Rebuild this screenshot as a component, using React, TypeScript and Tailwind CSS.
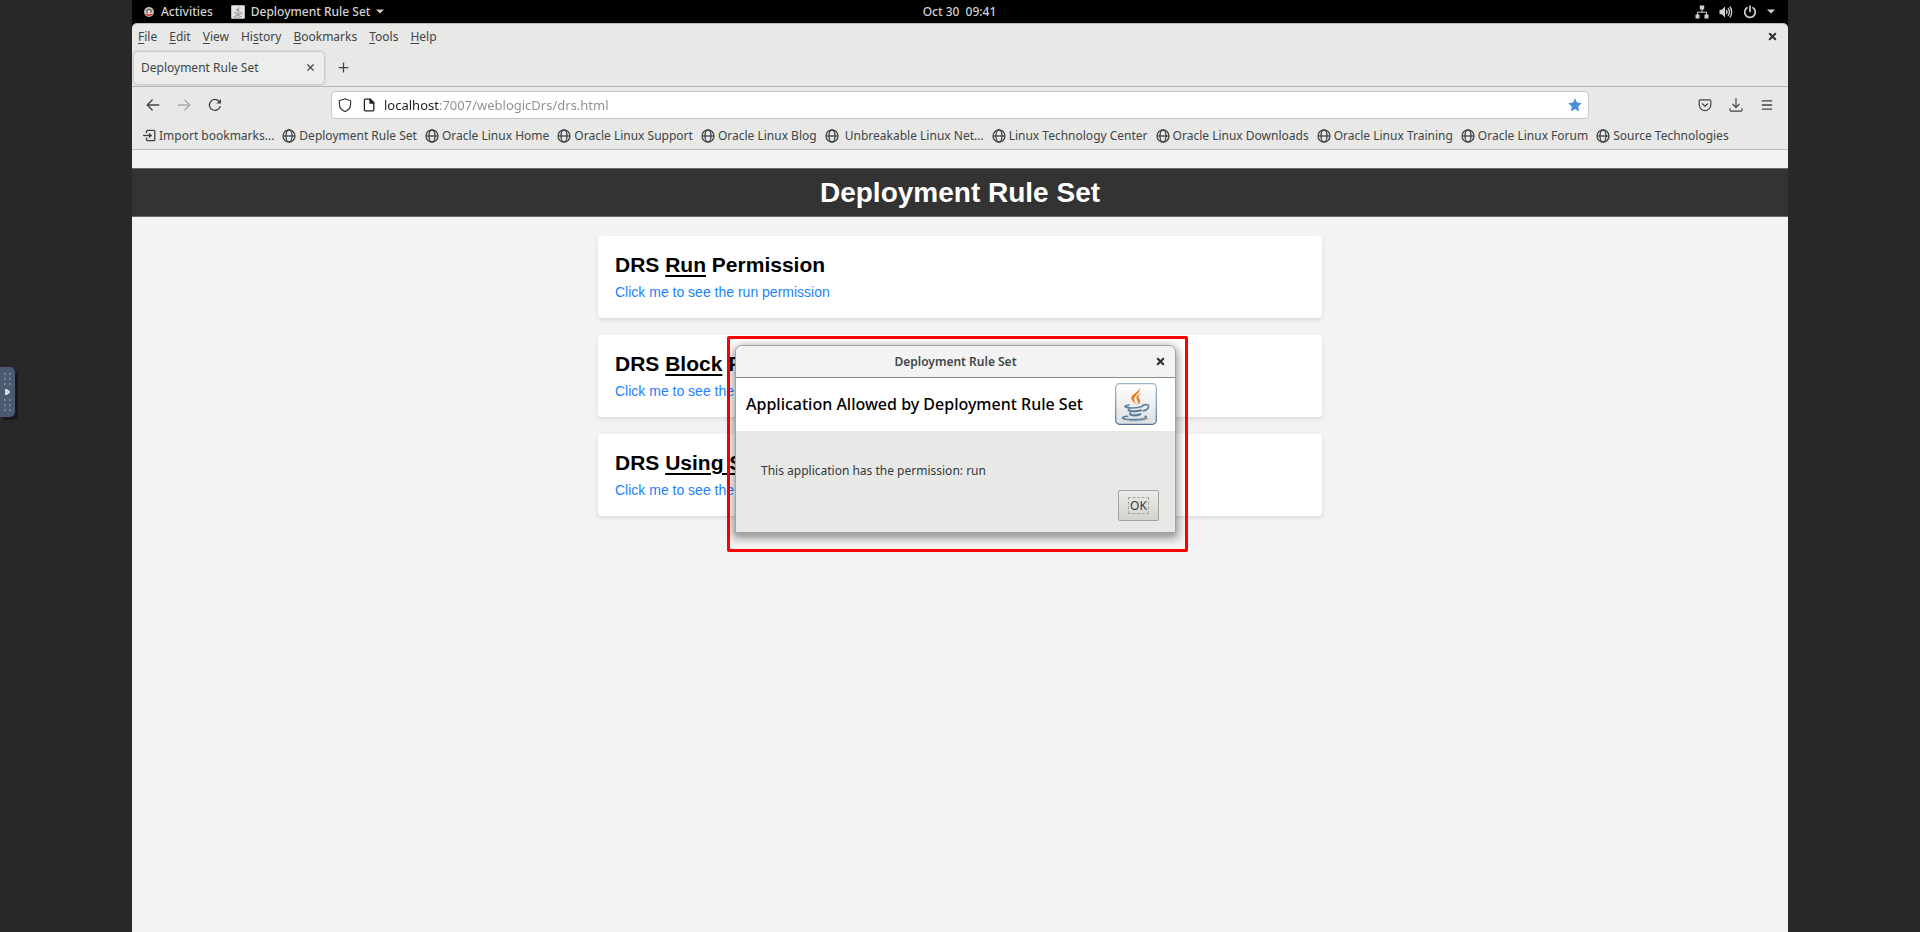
import React from 'react';
import { Menu, Plus, X } from 'lucide-react';

type IconProps = { className?: string };

const bookmarks: string[] = [
  'Deployment Rule Set',
  'Oracle Linux Home',
  'Oracle Linux Support',
  'Oracle Linux Blog',
  ' Unbreakable Linux Net...',
  'Linux Technology Center',
  'Oracle Linux Downloads',
  'Oracle Linux Training',
  'Oracle Linux Forum',
  'Source Technologies',
];

const menus: [string, string, string][] = [
  ['', 'F', 'ile'],
  ['', 'E', 'dit'],
  ['', 'V', 'iew'],
  ['Hi', 's', 'tory'],
  ['', 'B', 'ookmarks'],
  ['', 'T', 'ools'],
  ['', 'H', 'elp'],
];

const cards = [
  { emphasis: 'Run', rest: ' Permission', link: 'Click me to see the run permission' },
  { emphasis: 'Block', rest: ' Permission', link: 'Click me to see the block permission' },
  { emphasis: 'Using S', rest: '', link: 'Click me to see the permission' },
];

function JavaCup({ mono = false }: { mono?: boolean }) {
  const steam = mono ? '#777' : '#ec7a1c';
  const cup = mono ? '#777' : '#5c7f9c';
  return (
    <svg viewBox="0 0 42 42" className="size-full" fill="none" aria-hidden="true">
      <defs>
        <linearGradient id="tile" x1="0" y1="0" x2="0" y2="1">
          <stop offset="0" stopColor="#ffffff" />
          <stop offset="1" stopColor="#dedfe1" />
        </linearGradient>
        <linearGradient id="rim" x1="0" y1="0" x2="0" y2="1">
          <stop offset="0" stopColor="#a3b6c8" />
          <stop offset="1" stopColor="#4d718f" />
        </linearGradient>
      </defs>
      <rect x="0.7" y="0.7" width="40.6" height="40.6" rx="4" fill={mono ? '#e4e4e4' : 'url(#tile)'} stroke={mono ? '#ccc' : 'url(#rim)'} strokeWidth="1.2" />
      <path d="M24.4 4.2c1.5 4-7.9 6.4-8.1 10.6-.1 2.9 3.5 5.1 4.9 7.4-1.2-3.100-2.400-4.500-2-6.800.5-3.200 7.400-6 5.200-11.200z" fill={steam} />
      <path d="M27.7 9.6c-3.300 1-6.400 2.900-6.300 5.500.1 2.100 2.200 2.900 1.400 4.900-.3.800-.8 1.300-1.300 1.900 2.300-1 4.200-2.700 3.500-4.700-.4-1.300-1.700-2-1.500-3.500.2-1.800 2.100-3 4.200-4.100z" fill={steam} />
      <path d="M14 22c-3.800.5-5.400 1.700-2.200 2.400 4.600.8 11.800.4 15.800-1.100" stroke={cup} strokeWidth="1.6" strokeLinecap="round" />
      <path d="M27.8 22.300c4-1.700 7 .2 5.400 2.700-.9 1.500-2.900 2.500-4.900 2.900" stroke={cup} strokeWidth="1.6" strokeLinecap="round" />
      <path d="M13.700 26.500c-1 2 7.500 2.400 12.400.8" stroke={cup} strokeWidth="2.2" strokeLinecap="round" />
      <path d="M15.200 30.500c-1 2 6 2.500 10.100.7" stroke={cup} strokeWidth="2.2" strokeLinecap="round" />
      <path d="M12.700 33.200c-4 .2-6.600 1.700-4 2.500 4.500 1.500 19 1.200 22.300-.9.700-.6 0-1.200-.9-1.400" stroke={cup} strokeWidth="1.6" strokeLinecap="round" />
      <path d="M15 37.800c7 .4 14.700-.2 17.700-2.300" stroke={cup} strokeWidth="1" strokeLinecap="round" opacity=".5" />
    </svg>
  );
}

function CaretDown() {
  return (
    <svg viewBox="0 0 8 5" className="h-[5px] w-2" aria-hidden="true">
      <path d="M0 0.5h8L4 4.500z" fill="#d2d2d2" />
    </svg>
  );
}

function ActivitiesIcon() {
  return (
    <svg viewBox="0 0 10 10" className="size-[10px]" aria-hidden="true">
      <circle cx="5" cy="5" r="4.900" fill="#c9c6c2" />
      <path d="M2.200 3.600C2.600 1.200 7.400 1.200 7.800 3.600L7.300 6H2.700z" fill="#6a5450" />
      <ellipse cx="5" cy="4.700" rx="1.500" ry="1.600" fill="#efe9e4" />
      <path d="M1.200 6.600c2 1 5.600 1 7.600 0-.4 1.800-1.800 2.500-3.800 2.500S1.600 8.400 1.200 6.600z" fill="#d8402f" />
    </svg>
  );
}

function NetworkIcon() {
  return (
    <svg viewBox="0 0 14 14" className="size-[14px]" aria-hidden="true">
      <path d="M4.800 0.500h4.400v4H4.800zM0.500 9.500h4v4h-4zM9.500 9.500h4v4h-4z" fill="#d2d2d2" />
      <path d="M7 4v3.200M2.500 10V7.200h9V10" fill="none" stroke="#d2d2d2" strokeWidth="1" />
    </svg>
  );
}

function VolumeIcon() {
  return (
    <svg viewBox="0 0 14 14" className="size-[14px]" fill="none" stroke="#d2d2d2" aria-hidden="true">
      <path d="M0.500 4.800h2.300L6 1.600v10.800L2.800 9.200H0.500z" fill="#d2d2d2" stroke="none" />
      <path d="M7.300 5c.9 1.200.9 2.800 0 4" strokeWidth="1.300" />
      <path d="M9 3.200c1.700 2.200 1.700 5.400 0 7.600" strokeWidth="1.300" />
      <path d="M10.800 1.500c2.500 3.200 2.500 7.800 0 11" strokeWidth="1.300" />
    </svg>
  );
}

function PowerIcon() {
  return (
    <svg viewBox="0 0 14 14" className="size-[14px]" fill="none" stroke="#d2d2d2" strokeWidth="1.700" strokeLinecap="round" aria-hidden="true">
      <path d="M7 1v5.500" />
      <path d="M4 2.800a5.300 5.300 0 1 0 6 0" />
    </svg>
  );
}

function ArrowIcon({ className }: IconProps) {
  return (
    <svg viewBox="0 0 14 14" className={className} fill="none" stroke="currentColor" strokeWidth="1.300" strokeLinecap="round" strokeLinejoin="round" aria-hidden="true">
      <path d="M12.800 7H1.200M6.200 2L1.200 7l5 5" />
    </svg>
  );
}

function ReloadIcon() {
  return (
    <svg viewBox="0 0 14 14" className="size-[14px]" fill="none" stroke="currentColor" strokeWidth="1.300" strokeLinecap="round" aria-hidden="true">
      <path d="M12.200 8.300A5.500 5.500 0 1 1 11 3.200l1 1" />
      <path d="M13 1v4.500H8.500z" fill="currentColor" stroke="none" />
    </svg>
  );
}

function ShieldIcon() {
  return (
    <svg viewBox="0 0 14 14" className="size-[14px]" fill="none" stroke="#33393b" strokeWidth="1.200" strokeLinejoin="round" aria-hidden="true">
      <path d="M7 0.800l5.600 2v3.400c0 3.500-2.200 6-5.600 7.300C3.600 12.200 1.400 9.700 1.400 6.200V2.800z" />
    </svg>
  );
}

function PageIcon() {
  return (
    <svg viewBox="0 0 12 14" className="h-[14px] w-[12px]" fill="none" stroke="#222" strokeWidth="1.300" strokeLinejoin="round" aria-hidden="true">
      <path d="M2.400 1.200h4.800l3.600 3.600v7q0 1-1 1H2.400q-1 0-1-1V2.200q0-1 1-1z" />
      <path d="M7 1.200V5h3.800z" fill="#222" />
    </svg>
  );
}

function StarIcon() {
  return (
    <svg viewBox="0 0 14 14" className="size-[14px]" aria-hidden="true">
      <path d="M7 .3l2 4.300 4.700.6-3.400 3.300.8 4.900L7 11.100l-4.100 2.300.8-4.900L.3 5.200 5 4.600z" fill="#4a90d9" />
    </svg>
  );
}

function PocketIcon() {
  return (
    <svg viewBox="0 0 14 14" className="size-[14px]" fill="none" stroke="currentColor" strokeWidth="1.200" strokeLinecap="round" strokeLinejoin="round" aria-hidden="true">
      <path d="M2.200 1.800h9.600q1 0 1 1v4a5.800 5.800 0 0 1-11.600 0v-4q0-1 1-1z" />
      <path d="M4.300 5.800L7 8.300l2.700-2.500" />
    </svg>
  );
}

function DownloadIcon() {
  return (
    <svg viewBox="0 0 14 14" className="size-[14px]" fill="none" stroke="currentColor" strokeWidth="1.200" strokeLinecap="round" strokeLinejoin="round" aria-hidden="true">
      <path d="M7 .7v8.600M3.700 6.200L7 9.500l3.300-3.300" />
      <path d="M1 10.500v1.300q0 1.400 1.400 1.400h9.200q1.400 0 1.400-1.400v-1.300" />
    </svg>
  );
}

function ImportIcon() {
  return (
    <svg viewBox="0 0 13 13" className="size-[13px] shrink-0" fill="none" stroke="currentColor" strokeWidth="1.300" strokeLinejoin="round" aria-hidden="true">
      <path d="M3.500 4.200V2.300q0-1 1-1h6.300q1 0 1 1v8.400q0 1-1 1H4.500q-1 0-1-1V8.800" />
      <path d="M0 6.500h7" />
      <path d="M6 3.800l3.200 2.700L6 9.200z" fill="currentColor" stroke="none" />
    </svg>
  );
}

function GlobeIcon() {
  return (
    <svg viewBox="0 0 14 14" className="size-[14px] shrink-0" fill="none" stroke="currentColor" strokeWidth="1.300" aria-hidden="true">
      <circle cx="7" cy="7" r="6" />
      <ellipse cx="7" cy="7" rx="3" ry="6" />
      <path d="M1 7h12" />
    </svg>
  );
}

function TopBar() {
  return (
    <header className="grid h-[23px] grid-cols-3 items-center bg-black pr-[13px] pl-3 text-[12px] font-medium text-[#d2d2d2]">
      <div className="flex items-center">
        <button className="flex items-center gap-[7px]">
          <ActivitiesIcon />
          Activities
        </button>
        <button className="ml-[18px] flex items-center gap-[6px]">
          <span className="size-[14px]"><JavaCup mono /></span>
          Deployment Rule Set
          <CaretDown />
        </button>
      </div>
      <button className="justify-self-center whitespace-pre">Oct 30  09:41</button>
      <div className="flex items-center gap-[10px] justify-self-end">
        <NetworkIcon />
        <VolumeIcon />
        <PowerIcon />
        <CaretDown />
      </div>
    </header>
  );
}

function BrowserChrome() {
  return (
    <div className="rounded-t-[5px] border-t border-[#bdbdba] bg-[#e8e8e6] text-[12px] text-[#3f4547]">
      <div className="flex h-[25px] items-center justify-between pr-[10px] pl-[6px]">
        <nav className="flex gap-3" aria-label="Menu bar">
          {menus.map(([before, key, after]) => (
            <button key={before + key + after}>
              {before}
              <span className="underline underline-offset-2">{key}</span>
              {after}
            </button>
          ))}
        </nav>
        <button aria-label="Close window" className="text-[#2e3436]"><X size={11} strokeWidth={4.5} /></button>
      </div>

      <div className="flex h-[38px] items-center gap-[12px] border-b border-[#b6b6b3] px-[2px]">
        <div className="flex h-8 w-[190px] items-center justify-between rounded-[4px] bg-[#ededec] pr-2 pl-[7px] shadow-[0_0_3px_rgba(0,0,0,0.35)]">
          Deployment Rule Set
          <button aria-label="Close tab"><X size={11} strokeWidth={2.5} /></button>
        </div>
        <button aria-label="New tab"><Plus size={15} strokeWidth={2} /></button>
      </div>

      <div className="flex h-[36px] items-center">
        <div className="flex w-[199px] items-center gap-[17px] pl-[14px]">
          <button aria-label="Back"><ArrowIcon className="size-[14px]" /></button>
          <button aria-label="Forward" className="text-[#a9abaa]"><ArrowIcon className="size-[14px] rotate-180" /></button>
          <button aria-label="Reload"><ReloadIcon /></button>
        </div>
        <div className="flex h-7 flex-1 items-center rounded-[4px] border border-[#c6c6c4] bg-white px-[6px]">
          <ShieldIcon />
          <span className="mr-[9px] ml-[11px]"><PageIcon /></span>
          <input
            type="text"
            aria-label="Address"
            defaultValue="localhost:7007/weblogicDrs/drs.html"
            className="min-w-0 flex-1 bg-[linear-gradient(to_right,#1c1f20_55px,#8b8e8f_55px)] bg-clip-text text-[13px] leading-5 text-transparent caret-black outline-none"
          />
          <button aria-label="Bookmark this page"><StarIcon /></button>
        </div>
        <div className="flex w-[199px] items-center justify-end gap-[17px] pr-[14px]">
          <button aria-label="Save to Pocket"><PocketIcon /></button>
          <button aria-label="Downloads"><DownloadIcon /></button>
          <button aria-label="Open menu"><Menu size={14} strokeWidth={2.2} /></button>
        </div>
      </div>

      <nav className="flex h-[27px] items-center gap-2 overflow-hidden border-b border-[#b9b9b6] pb-px pl-[11px] whitespace-pre" aria-label="Bookmarks">
        <a href="#import" className="flex items-center gap-[3px]"><ImportIcon />Import bookmarks...</a>
        {bookmarks.map((name) => (
          <a key={name} href="#bookmark" className="flex items-center gap-[3px]">
            <GlobeIcon />
            {name}
          </a>
        ))}
      </nav>
    </div>
  );
}

function RuleDialog() {
  return (
    <div className="absolute top-[336px] left-[595px] w-[461px] rounded-[2px] border-[3px] border-[#ff0000] p-[5px] pb-4">
      <section role="dialog" aria-label="Deployment Rule Set" className="mt-px w-[441px] overflow-hidden rounded-t-[7px] border border-[#a3a3a0] bg-[#e8e8e6] text-[12px] text-[#33393b] shadow-[0_3px_9px_2px_rgba(0,0,0,0.4)]">
        <div className="grid h-8 grid-cols-[1fr_auto_1fr] items-center border-b border-[#8d8d85] bg-[#f3f3f3] px-[9px]">
          <h2 className="col-start-2 font-semibold text-[#42484a]">Deployment Rule Set</h2>
          <button aria-label="Close dialog" className="justify-self-end text-[#2e3436]"><X size={11} strokeWidth={4.5} /></button>
        </div>
        <div className="flex h-[53px] items-center justify-between bg-white pr-[18px] pb-[2px] pl-[10px]">
          <h3 className="text-[16px] font-medium text-black">Application Allowed by Deployment Rule Set</h3>
          <span className="size-[42px]"><JavaCup /></span>
        </div>
        <div className="flex h-[101px] flex-col justify-between pt-[31px] pr-4 pb-[11px] pl-[25px]">
          <p className="leading-[18px]">This application has the permission: run</p>
          <button className="flex h-[31px] w-[41px] items-center justify-center self-end rounded-[2px] border border-[#a2a29f] bg-linear-to-b from-[#ececea] to-[#d2d2cf]">
            <span className="border border-dashed border-[#a6a6a3] px-px leading-[15px]">OK</span>
          </button>
        </div>
      </section>
    </div>
  );
}

function SideHandle() {
  return (
    <button aria-label="Open control panel" className="absolute top-[367px] left-0 flex h-[50px] w-[15px] items-center justify-center rounded-r-[5px] bg-[#4b5a70] shadow-[3px_3px_0_#191919]">
      <svg viewBox="0 0 15 50" className="h-[50px] w-[15px]" aria-hidden="true">
        {[6, 11, 16, 32, 37, 42].map((y) => (
          <g key={y} fill="#77839a">
            <rect x="4" y={y} width="2" height="2" />
            <rect x="9" y={y} width="2" height="2" />
          </g>
        ))}
        <path d="M5 22h2l3 2.500v1L7 28H5z" fill="#dcdcdc" />
      </svg>
    </button>
  );
}

export default function App() {
  return (
    <div className="relative flex min-h-screen bg-[#282828] px-[132px] font-['Noto_Sans',sans-serif]">
      <SideHandle />
      <div className="relative flex min-w-0 flex-1 flex-col bg-black">
        <TopBar />
        <BrowserChrome />
        <main className="flex-1 bg-[#f3f3f3] pt-[18px] font-['Liberation_Sans',sans-serif]">
          <h1 className="border-y border-[#6b6868] bg-[#333] text-center text-[28px] leading-[47px] font-bold text-white">Deployment Rule Set</h1>
          <div className="mx-auto mt-[19px] flex max-w-[724px] flex-col gap-[17px]">
            {cards.map((card) => (
              <article key={card.emphasis} className="h-[82px] rounded-[4px] bg-white px-[17px] pt-[17px] shadow-[0_2px_4px_rgba(0,0,0,0.1)]">
                <h2 className="text-[21px] leading-6 font-bold text-black">
                  DRS <span className="underline decoration-2 underline-offset-3">{card.emphasis}</span>
                  {card.rest}
                </h2>
                <a href="#permission" className="mt-[7px] block text-[14px] leading-4 text-[#1a82fb]">{card.link}</a>
              </article>
            ))}
          </div>
        </main>
        <RuleDialog />
      </div>
    </div>
  );
}
